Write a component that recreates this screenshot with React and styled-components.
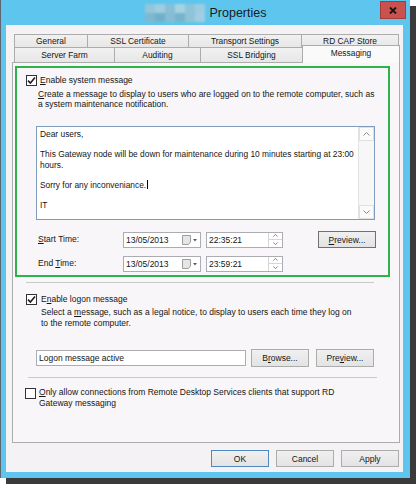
import React from 'react';
import styled, { createGlobalStyle, css } from 'styled-components';

const GlobalStyle = createGlobalStyle`
  html, body {
    margin: 0;
    padding: 0;
    background: #ffffff;
  }
  body {
    font-family: "Liberation Sans", Arial, sans-serif;
    color: #151515;
  }
`;

const Screen = styled.div`
  width: 416px;
  height: 484px;
  overflow: hidden;
  background: #ffffff;
`;

const Window = styled.div`
  width: 410px;
  height: 478px;
  box-sizing: border-box;
  border-left: 1px solid #5b6670;
  background: #5ec6ee;
  box-shadow: 6px 6px 0 #3a3a3a;
  display: flex;
  flex-direction: column;
`;

const TitleBar = styled.div`
  height: 25px;
  flex: none;
  display: grid;
  grid-template-columns: 1fr auto 1fr;
  align-items: center;
`;

const TitleText = styled.div`
  grid-column: 2;
  display: flex;
  align-items: center;
  gap: 5px;
  font-size: 12.5px;
  color: #1a1a1a;
  padding-top: 1px;
`;

const Mosaic = styled.div`
  display: grid;
  grid-template-columns: repeat(6, 10px);
  grid-template-rows: repeat(2, 9px);
  filter: blur(1px);
`;

const Cell = styled.div`
  background: ${p => p.$c};
`;

const CloseBtn = styled.div`
  grid-column: 3;
  justify-self: end;
  align-self: start;
  margin: 1px 4px 0 0;
  width: 26px;
  height: 18px;
  box-sizing: border-box;
  background: #c9524e;
  border: 1px solid #a23d3a;
  display: flex;
  align-items: center;
  justify-content: center;
`;

const Client = styled.div`
  flex: 1;
  margin: 0 7px 6px 5px;
  background: #f4f2f5;
  padding-top: 9px;
  display: flex;
  flex-direction: column;
`;

const TabArea = styled.div`
  margin-left: 6px;
  width: 388px;
`;

const TabRow = styled.div`
  display: flex;
  align-items: flex-start;
  padding-left: 2px;
  height: ${p => p.$h}px;
`;

const Tab = styled.div`
  box-sizing: border-box;
  flex: none;
  width: ${p => p.$w}px;
  height: ${p => p.$h}px;
  margin-left: -1px;
  &:first-child {
    margin-left: 0;
  }
  border: 1px solid #acacac;
  border-bottom: none;
  background: linear-gradient(#f1f1f1, #e7e7e7);
  display: flex;
  align-items: center;
  justify-content: center;
  font-size: 8.4px;
  color: #151515;
  ${p => p.$selected && css`
    background: #fbfafb;
    height: ${p.$h + 3}px;
    margin-top: -2px;
    padding-bottom: 3px;
    position: relative;
    z-index: 1;
  `}
`;

const Panel = styled.div`
  width: 388px;
  height: 381px;
  box-sizing: border-box;
  border: 1px solid #acacac;
  background: #f8f6f8;
  display: flex;
  flex-direction: column;
`;

const GreenBox = styled.div`
  margin: 3px 0 0 2px;
  width: 375px;
  height: 211px;
  box-sizing: border-box;
  border: 2px solid #2db34c;
  display: flex;
  flex-direction: column;
`;

const CheckRow = styled.div`
  display: flex;
  align-items: flex-start;
  gap: ${p => p.$gap}px;
  margin: ${p => p.$mt}px 0 0 ${p => p.$ml}px;
`;

const Box = styled.div`
  flex: none;
  width: 11px;
  height: 11px;
  box-sizing: border-box;
  border: 1px solid #333333;
  background: #ffffff;
  display: flex;
  align-items: center;
  justify-content: center;
`;

const Text = styled.div`
  font-size: 8.5px;
  line-height: ${p => p.$lh || 11}px;
  white-space: nowrap;
  margin-top: ${p => p.$mt || 0}px;
  margin-left: ${p => p.$ml || 0}px;
  color: #151515;
  & u {
    text-underline-offset: 1px;
  }
`;

const MessageBox = styled.div`
  margin: 17px 0 0 19px;
  width: 339px;
  height: 94px;
  box-sizing: border-box;
  border: 1px solid #7f9cbd;
  background: #ffffff;
  display: flex;
`;

const MessageText = styled.div`
  flex: 1;
  padding: 2px 3px;
  font-size: 8.4px;
  line-height: 10.2px;
  white-space: nowrap;
`;

const Caret = styled.span`
  display: inline-block;
  width: 1px;
  height: 9px;
  background: #000000;
  vertical-align: -1px;
  margin-left: 1px;
`;

const ScrollBar = styled.div`
  width: 15px;
  flex: none;
  border-left: 1px solid #e2e2e2;
  background: #f7f7f7;
  display: flex;
  flex-direction: column;
  justify-content: space-between;
`;

const ScrollArrow = styled.div`
  height: 14px;
  box-sizing: border-box;
  border: 1px solid #e0e0e0;
  background: #fbfbfb;
  display: flex;
  align-items: center;
  justify-content: center;
`;

const TimeRow = styled.div`
  display: flex;
  align-items: center;
  height: 17px;
  margin-top: ${p => p.$mt}px;
  padding-left: 21px;
`;

const RowLabel = styled(Text)`
  width: 85px;
  flex: none;
`;

const Field = styled.div`
  flex: none;
  width: ${p => p.$w}px;
  height: 16px;
  margin-left: ${p => p.$ml || 0}px;
  box-sizing: border-box;
  border: 1px solid #abadb3;
  background: #ffffff;
  display: flex;
  align-items: center;
  font-size: 8.5px;
  padding-left: 2px;
  white-space: nowrap;
`;

const PickerIcon = styled.div`
  margin-left: auto;
  margin-right: 3px;
  display: flex;
  align-items: center;
  gap: 1px;
`;

const Spinner = styled.div`
  margin-left: auto;
  width: 13px;
  height: 100%;
  border-left: 1px solid #d6d6d6;
  display: flex;
  flex-direction: column;
`;

const SpinBtn = styled.div`
  flex: 1;
  display: flex;
  align-items: center;
  justify-content: center;
  & + & {
    border-top: 1px solid #d6d6d6;
  }
`;

const Button = styled.div`
  flex: none;
  width: 58px;
  height: ${p => p.$h || 17}px;
  margin-left: ${p => p.$ml || 0}px;
  box-sizing: border-box;
  border: 1px solid ${p => (p.$default ? '#4f89c0' : p.$focus ? '#707070' : '#acacac')};
  background: linear-gradient(#f0f0f0, #e3e3e3);
  display: flex;
  align-items: center;
  justify-content: center;
  font-size: 8.5px;
  color: #151515;
  & u {
    text-underline-offset: 1px;
  }
`;

const Separator = styled.div`
  margin: ${p => p.$mt}px 0 0 ${p => p.$ml}px;
  width: ${p => p.$w}px;
  height: 1px;
  background: #c9c9c9;
`;

const LogonRow = styled.div`
  display: flex;
  align-items: center;
  height: 18px;
  margin: 20px 0 0 23px;
`;

const Footer = styled.div`
  display: flex;
  justify-content: flex-end;
  gap: 7px;
  margin-top: 7px;
  padding-right: 4px;
`;

const mosaic = [
  '#93c6db', '#9fcde1', '#87bfd6', '#a6d2e4', '#8ec4da', '#9ccce0',
  '#7db8cf', '#70b1ca', '#86bdd3', '#77b4cc', '#90c3d8', '#a1cee2',
];

const Check = () => (
  <svg width="9" height="9" viewBox="0 0 9 9">
    <path d="M1 4.6 L3.4 7 L8 1.6" fill="none" stroke="#1e1e1e" strokeWidth="1.6" />
  </svg>
);

const Chevron = ({ up, color = '#8a8a8a', w = 7, h = 4 }) => (
  <svg width={w} height={h} viewBox="0 0 7 4">
    <path d={up ? 'M0.5 3.5 L3.5 0.5 L6.5 3.5' : 'M0.5 0.5 L3.5 3.5 L6.5 0.5'} fill="none" stroke={color} strokeWidth="1" />
  </svg>
);

const CalendarIcon = () => (
  <svg width="15" height="10" viewBox="0 0 15 10">
    <path d="M0.5 0.5 H8.5 V7 L6.5 9.5 H0.5 Z" fill="#e6e6e6" stroke="#9c9c9c" />
    <path d="M11 4 L15 4 L13 6.5 Z" fill="#4f5f78" />
  </svg>
);

function CheckBox({ checked }) {
  return <Box>{checked && <Check />}</Box>;
}

function DatePicker({ value }) {
  return (
    <Field $w={78}>
      {value}
      <PickerIcon>
        <CalendarIcon />
      </PickerIcon>
    </Field>
  );
}

function TimePicker({ value }) {
  return (
    <Field $w={77} $ml={5}>
      {value}
      <Spinner>
        <SpinBtn><Chevron up color="#555" w={5} h={3} /></SpinBtn>
        <SpinBtn><Chevron color="#555" w={5} h={3} /></SpinBtn>
      </Spinner>
    </Field>
  );
}

export default function App() {
  return (
    <Screen>
      <GlobalStyle />
      <Window>
        <TitleBar>
          <TitleText>
            <Mosaic>
              {mosaic.map((c, i) => <Cell key={i} $c={c} />)}
            </Mosaic>
            Properties
          </TitleText>
          <CloseBtn>
            <svg width="8" height="7" viewBox="0 0 8 7">
              <path d="M1 0.5 L7 6.5 M7 0.5 L1 6.5" stroke="#161616" strokeWidth="1.9" />
            </svg>
          </CloseBtn>
        </TitleBar>

        <Client>
          <TabArea>
            <TabRow $h={13}>
              <Tab $w={74} $h={13}>General</Tab>
              <Tab $w={102} $h={13}>SSL Certificate</Tab>
              <Tab $w={114} $h={13}>Transport Settings</Tab>
              <Tab $w={98} $h={13}>RD CAP Store</Tab>
            </TabRow>
            <TabRow $h={15}>
              <Tab $w={101} $h={15}>Server Farm</Tab>
              <Tab $w={87} $h={15}>Auditing</Tab>
              <Tab $w={103} $h={15}>SSL Bridging</Tab>
              <Tab $w={98} $h={15} $selected>Messaging</Tab>
            </TabRow>

            <Panel>
              <GreenBox>
                <CheckRow $mt={7} $ml={9} $gap={3}>
                  <CheckBox checked />
                  <Text><u>E</u>nable system message</Text>
                </CheckRow>
                <Text $lh={10} $mt={3} $ml={21}>
                  <u>C</u>reate a message to display to users who are logged on to the remote computer, such as
                  <br />
                  a system maintenance notification.
                </Text>

                <MessageBox>
                  <MessageText>
                    Dear users,
                    <br />
                    <br />
                    This Gateway node will be down for maintenance during 10 minutes starting at 23:00
                    <br />
                    hours.
                    <br />
                    <br />
                    Sorry for any inconveniance.<Caret />
                    <br />
                    <br />
                    IT
                  </MessageText>
                  <ScrollBar>
                    <ScrollArrow><Chevron up /></ScrollArrow>
                    <ScrollArrow><Chevron /></ScrollArrow>
                  </ScrollBar>
                </MessageBox>

                <TimeRow $mt={11}>
                  <RowLabel><u>S</u>tart Time:</RowLabel>
                  <DatePicker value="13/05/2013" />
                  <TimePicker value="22:35:21" />
                  <Button $ml={35} $focus><u>P</u>review...</Button>
                </TimeRow>
                <TimeRow $mt={7}>
                  <RowLabel>End <u>T</u>ime:</RowLabel>
                  <DatePicker value="13/05/2013" />
                  <TimePicker value="23:59:21" />
                </TimeRow>
              </GreenBox>

              <Separator $mt={5} $ml={13} $w={348} />

              <CheckRow $mt={11} $ml={13} $gap={4}>
                <CheckBox checked />
                <Text>E<u>n</u>able logon message</Text>
              </CheckRow>
              <Text $mt={2} $ml={28}>
                Select a <u>m</u>essage, such as a legal notice, to display to users each time they log on
                <br />
                to the remote computer.
              </Text>

              <LogonRow>
                <Field $w={210}>Logon message active</Field>
                <Button $h={18} $ml={5}>B<u>r</u>owse...</Button>
                <Button $h={18} $ml={7}>Pre<u>v</u>iew...</Button>
              </LogonRow>

              <Separator $mt={10} $ml={15} $w={349} />

              <CheckRow $mt={10} $ml={12} $gap={3}>
                <CheckBox />
                <Text $mt={-1}>
                  <u>O</u>nly allow connections from Remote Desktop Services clients that support RD
                  <br />
                  Gateway messaging
                </Text>
              </CheckRow>
            </Panel>
          </TabArea>

          <Footer>
            <Button $default>OK</Button>
            <Button>Cancel</Button>
            <Button>Apply</Button>
          </Footer>
        </Client>
      </Window>
    </Screen>
  );
}
